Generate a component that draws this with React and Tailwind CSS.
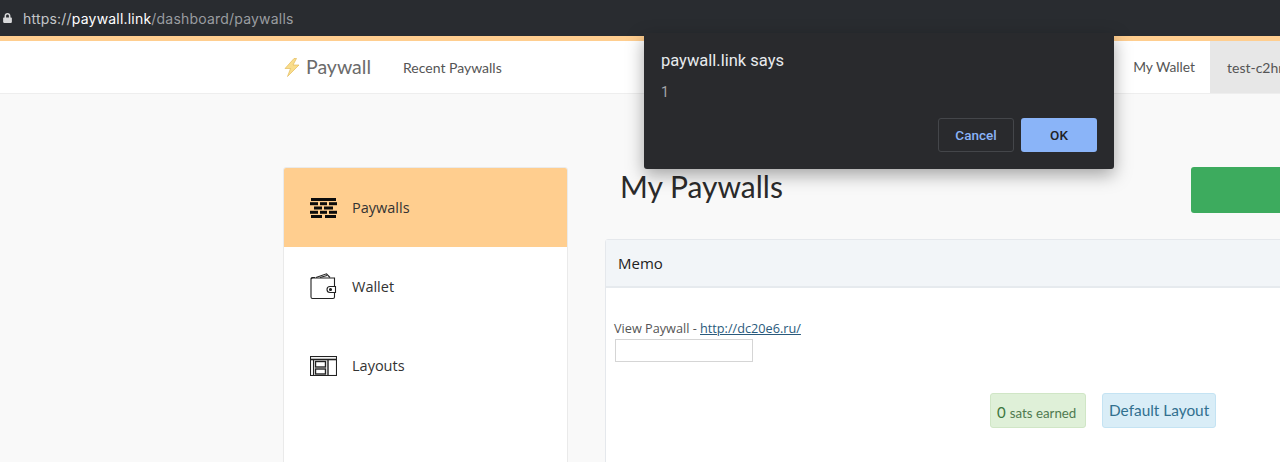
import React from 'react';
import { FaLock } from 'react-icons/fa';

const cabin = "font-['Lato','Noto_Sans',sans-serif]";

const BrickIcon = () => (
  <svg width="27" height="20" viewBox="0 0 27 20" fill="#0c0c0c">
    <rect x="1" y="0" width="25" height="3" />
    <rect x="0" y="4.2" width="8" height="3" /><rect x="10" y="4.2" width="7" height="3" /><rect x="19" y="4.2" width="8" height="3" />
    <rect x="4" y="8.5" width="8" height="3" /><rect x="14" y="8.5" width="9" height="3" />
    <rect x="0" y="12.8" width="8" height="3" /><rect x="10" y="12.8" width="7" height="3" /><rect x="19" y="12.8" width="8" height="3" />
    <rect x="1" y="17" width="11" height="3" /><rect x="15" y="17" width="11" height="3" />
  </svg>
);

const WalletIcon = () => (
  <svg width="27" height="27" viewBox="0 0 27 27" fill="none" stroke="#222" strokeWidth="1.1">
    <path d="M5 4.5H2.5Q1 4.5 1 6V24Q1 25.5 2.5 25.5H23Q24.5 25.5 24.5 24V19.5" />
    <path d="M1 6Q1.5 5 3 5H24.5V13.5" />
    <path d="M6 4.5L16.5 0.8L20 4.5" />
    <path d="M10 4.5L17 2.5" />
    <path d="M25.5 13.5H20Q17 13.5 17 16.5Q17 19.5 20 19.5H25.5V13.5Z" />
    <circle cx="20.5" cy="16.5" r="1" fill="#222" />
  </svg>
);

const LayoutIcon = () => (
  <svg width="27" height="20" viewBox="0 0 27 20" fill="none" stroke="#222" strokeWidth="1.1">
    <rect x="0.5" y="0.5" width="26" height="19" />
    <path d="M0.5 3.5H26.5" strokeWidth="1.6" />
    <path d="M3.5 3.5V19.5" />
    <rect x="5.5" y="5.5" width="10" height="5.5" strokeWidth="1.4" />
    <rect x="5.5" y="13" width="10" height="5" strokeWidth="1.4" />
    <path d="M18 3.5V19.5" strokeWidth="1.4" />
  </svg>
);

const SideItem = ({ icon, label, active }) => (
  <div className={`flex items-center h-[79px] pl-[26px] ${active ? 'bg-[#ffce8f]' : ''}`}>
    <div className="w-[42px] flex items-center">{icon}</div>
    <span className="font-['Open_Sans',sans-serif] text-[14.5px] text-[#333]">{label}</span>
  </div>
);

export default function App() {
  return (
    <div className="relative h-[462px] w-[1280px] overflow-hidden bg-[#f9f9f9]">
      {/* browser url bar */}
      <div className="flex items-center h-9 bg-[#292c30] pl-[3px]">
        <FaLock className="text-[#d8d9da] w-[9px] h-[10px]" />
        <div className="ml-[11px] text-[14px] tracking-[0.2px] font-['Inter',sans-serif] text-[#9a9da0]">
          <span className="text-[#c4c6c8]">https://</span><span className="text-white">paywall.link</span>/dashboard/paywalls
        </div>
      </div>

      {/* site nav */}
      <div className="h-[5px] bg-[#ffce8f]" />
      <div className={`flex items-center h-[53px] bg-white border-b border-[#eeeeee] pl-[284px] ${cabin}`}>
        <svg width="16" height="19" viewBox="0 0 16 19" className="mr-[6px]">
          <path d="M10 0.5L1 10.5H6.5L3.5 18.5L15 7H9L12.5 0.5Z" fill="#f9dd8c" stroke="#dfb34c" strokeWidth="0.6" />
        </svg>
        <span className="text-[19.5px] text-[#6b6b6b]">Paywall</span>
        <span className="ml-8 text-[14px] text-[#555]">Recent Paywalls</span>
        <span className="ml-auto text-[13.8px] text-[#555]">My Wallet</span>
        <div className="ml-[15px] w-[70px] h-full bg-[#e7e7e7] pl-[17px] flex items-center overflow-hidden whitespace-nowrap text-[14px] text-[#555]">
          test-c2hn
        </div>
      </div>

      {/* page body */}
      <div className="flex items-start pl-[283px] pt-[73px] w-[1500px]">
        <div className="w-[285px] h-[400px] shrink-0 bg-white border border-[#eaeaea] rounded-[3px] overflow-hidden">
          <SideItem icon={<BrickIcon />} label="Paywalls" active />
          <SideItem icon={<WalletIcon />} label="Wallet" />
          <SideItem icon={<LayoutIcon />} label="Layouts" />
        </div>

        <div className="ml-[37px] flex-1">
          <div className={`flex items-start h-[72px] pl-[15px] ${cabin}`}>
            <h1 className="w-[571px] text-[30px] leading-[38px] text-[#2b2b2b]">My Paywalls</h1>
            <div className="w-[120px] h-[46px] bg-[#3dab5e] rounded-[3px]" />
          </div>

          <div className="bg-white border border-[#e5e8ec] rounded-[3px] h-[300px]">
            <div className="flex items-center h-[48px] pl-3 bg-[#f2f5f8] border-b-2 border-[#e6eaee] font-['Open_Sans',sans-serif] text-[15px] text-[#222]">
              Memo
            </div>
            <div className="pl-2 pt-8">
              <div className="font-['Open_Sans',sans-serif] text-[12.7px] leading-4 text-[#555]">
                View Paywall - <a className="underline text-[#2a5a7c]">http://dc20e6.ru/</a>
              </div>
              <input className="block ml-px mt-[3px] w-[138px] h-[23px] bg-white border border-[#d5d5d5]" />
              <div className={`flex items-center mt-[31px] ml-[376px] ${cabin}`}>
                <div className="flex items-baseline w-[96px] h-[35px] pt-[7px] pl-[6px] bg-[#dff0d8] border border-[#d0e6c6] rounded-[3px] text-[#3c763d] whitespace-nowrap">
                  <span className="text-[15px]">0</span>
                  <span className="ml-1 text-[13.3px] text-[#4f7a50]">sats earned</span>
                </div>
                <div className="ml-4 flex items-center w-[114px] h-[35px] pl-[6px] bg-[#d9edf7] border border-[#c4e3f3] rounded-[3px] text-[15.4px] text-[#31708f] whitespace-nowrap">
                  Default Layout
                </div>
              </div>
            </div>
          </div>
        </div>
      </div>

      {/* browser alert */}
      <div className="absolute left-[644px] top-[33px] w-[470px] h-[136px] bg-[#292a2d] rounded-b-[3px] shadow-[0_6px_18px_rgba(0,0,0,0.35)] px-[17px] font-['Roboto',sans-serif]">
        <div className="mt-[18px] text-[16.5px] leading-5 text-[#e8eaed]">paywall.link says</div>
        <div className="mt-[13px] text-[14px] leading-4 text-[#a4a6a9]">1</div>
        <div className="flex justify-end gap-[7px] mt-[18px]">
          <button className="w-[76px] h-[34px] rounded-[3px] border border-[#44464a] text-[13.5px] font-medium text-[#8ab4f8]">Cancel</button>
          <button className="w-[76px] h-[34px] rounded-[3px] bg-[#8ab4f8] text-[13.5px] font-medium text-[#202124]">OK</button>
        </div>
      </div>
    </div>
  );
}
